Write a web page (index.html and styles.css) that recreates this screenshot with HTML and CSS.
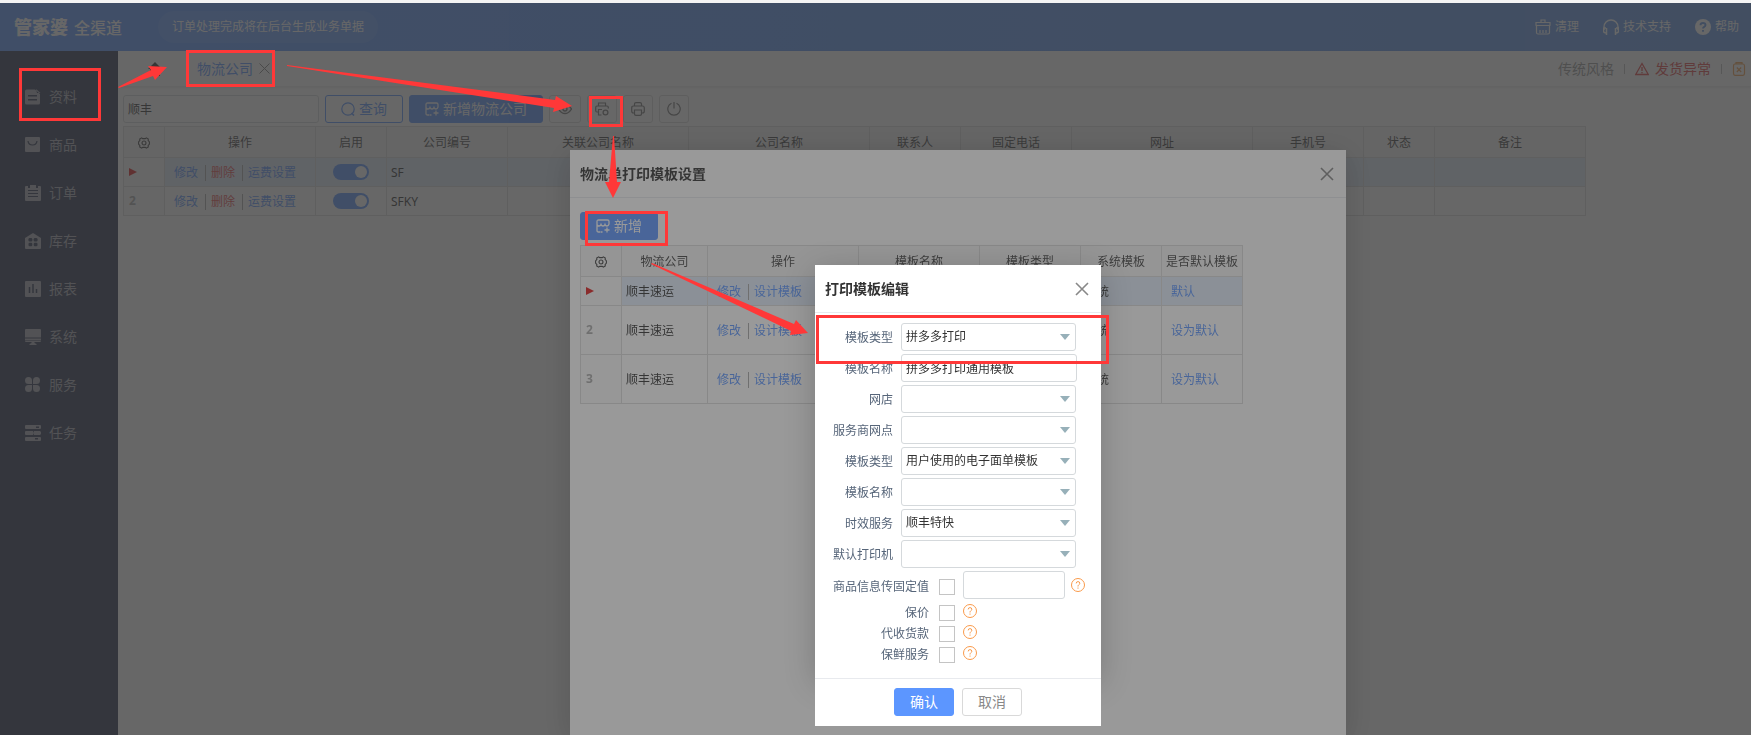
FILE: index.html
```html
<!DOCTYPE html>
<html lang="zh-CN">

<head>
  <meta charset="UTF-8">
  <meta name="viewport" content="width=device-width, initial-scale=1.0">
  <title>管家婆全渠道 - 物流公司</title>
  <link rel="stylesheet" href="styles.css">
</head>

<body>
  <!-- Shared icons -->
  <svg class="symbols" aria-hidden="true">
    <symbol id="icon-gear" viewBox="0 0 14 14">
      <path d="M4.300 1 L5.500 1.900 H8.500 L9.700 1 L12 2.400 L11.800 4 L13.300 5.800 V8.200 L11.800 10 L12 11.600 L9.700 13 L8.500 12.100 H5.500 L4.300 13 L2 11.600 L2.200 10 L.7 8.200 V5.800 L2.200 4 L2 2.400 Z" fill="none" stroke="currentColor" stroke-width="1.300" />
      <circle cx="7" cy="7" r="2.300" fill="none" stroke="currentColor" stroke-width="1.300" />
    </symbol>
    <symbol id="icon-add" viewBox="0 0 14 14">
      <path d="M4.500 13 H2.500 Q1 13 1 11.500 V2.500 Q1 1 2.500 1 H11.500 Q13 1 13 2.500 V5 Q12.500 7 11 7 Q9.500 7 9 5.500 Q8.500 7 7 7 Q5.500 7 5 5.500 Q4.500 7 3 7 Q1.500 7 1 5.500 M5 13 H6.500 M11 8.500 V13.500 M8.500 11 H13.500" fill="none" stroke="currentColor" stroke-width="1.300" />
    </symbol>
    <symbol id="icon-close" viewBox="0 0 14 14">
      <path d="M1 1 L13 13 M13 1 L1 13" fill="none" stroke="currentColor" stroke-width="1.600" />
    </symbol>
    <symbol id="icon-help" viewBox="0 0 14 14">
      <circle cx="7" cy="7" r="6.500" fill="none" stroke="currentColor" />
      <path d="M5.200 5.400 Q5.200 3.600 7 3.600 Q8.800 3.600 8.800 5.300 Q8.800 6.300 7.700 6.900 Q7 7.300 7 8.500 M7 9.500 V10.700" fill="none" stroke="currentColor" />
    </symbol>
  </svg>

  <div class="app">
    <header class="topbar">
      <div class="logo"><b>管家婆</b><span>全渠道</span></div>
      <div class="notice">订单处理完成将在后台生成业务单据</div>
      <nav class="top-links">
        <a href="#">
          <svg class="icon-16" viewBox="0 0 16 16"><path d="M6 3 V1 H10 V3 M1 6 V3.500 H15 V6 M.5 6.500 H15.500 M1.500 6.500 V13.500 Q1.500 15 3 15 H13 Q14.500 15 14.500 13.500 V6.500 M5 14 V11 M8 14 V11 M11 14 V11" fill="none" stroke="currentColor" stroke-width="1.200" /></svg>
          <span>清理</span>
        </a>
        <a href="#">
          <svg class="icon-16" viewBox="0 0 16 16"><path d="M1 11 V8 A7 7 0 0 1 15 8 V11" fill="none" stroke="currentColor" stroke-width="1.400" /><path d="M.5 9 H3 M3.500 9 V16 M12.500 9 V16 M13 9 H15.500 V12 Q15.500 14 13 14 M.5 9 V12 Q.5 14 3 14" fill="none" stroke="currentColor" stroke-width="1.500" /></svg>
          <span>技术支持</span>
        </a>
        <a href="#">
          <svg class="icon-16" viewBox="0 0 16 16"><circle cx="8" cy="8" r="8" fill="currentColor" /><path d="M5.500 6.200 Q5.500 4 8 4 Q10.500 4 10.500 6 Q10.500 7.200 9.200 7.800 Q8 8.400 8 9.600 M8 11 V12.800" fill="none" stroke="#6698e6" stroke-width="1.900" /></svg>
          <span>帮助</span>
        </a>
      </nav>
    </header>

    <div class="body">
      <nav class="sidebar">
        <a href="#"><svg class="icon-16" viewBox="0 0 16 16"><path fill-rule="evenodd" d="M1.500 .5 H10 L15 5 V14 Q15 15.500 13.500 15.500 H1.500 Q0 15.500 0 14 V2 Q0 .5 1.500 .5 Z M3 6 V7.500 H12 V6 Z M3 10 V11.500 H12 V10 Z M11 0 L15.500 4 H12 Z" fill="currentColor" /></svg>资料</a>
        <a href="#"><svg class="icon-16" viewBox="0 0 16 16"><rect width="15" height="15" rx="1" fill="currentColor" /><path d="M3 4 Q3.500 8 7.500 8 Q11.500 8 12 4" fill="none" stroke="#2b3350" stroke-width="1.200" /></svg>商品</a>
        <a href="#"><svg class="icon-16" viewBox="0 0 16 16"><path d="M1 1 H3 V3 H5 V0 H11 V3 H13 V1 H15 Q16 1 16 2 V15 Q16 16 15 16 H1 Q0 16 0 15 V2 Q0 1 1 1 Z" fill="currentColor" /><path d="M3 5.500 H13 M3 8.500 H13 M3 11.500 H13" stroke="#2b3350" /></svg>订单</a>
        <a href="#"><svg class="icon-16" viewBox="0 0 16 16"><path d="M8 0 L16 5 V15 Q16 16 15 16 H1 Q0 16 0 15 V5 Z" fill="currentColor" /><g fill="#2b3350"><rect x="3.500" y="5" width="3.800" height="3.500" rx="1.200" /><rect x="8.700" y="5" width="3.800" height="3.500" rx="1.200" /><rect x="3.500" y="9.800" width="3.800" height="3.500" rx="1.200" /><rect x="8.700" y="9.800" width="3.800" height="3.500" rx="1.200" /></g></svg>库存</a>
        <a href="#"><svg class="icon-16" viewBox="0 0 16 16"><rect width="16" height="16" rx="1" fill="currentColor" /><path d="M4.500 6 V12 M8 3 V12 M11.500 8 V12" stroke="#2b3350" stroke-width="1.500" /></svg>报表</a>
        <a href="#"><svg class="icon-16" viewBox="0 0 16 16"><path d="M1 0 H15 Q16 0 16 1 V8.500 H0 V1 Q0 0 1 0 Z M0 9.500 H16 V11 H0 Z M0 11.500 H16 V12 Q16 13 15 13 H1 Q0 13 0 12 Z M6.500 13 H9.500 V14 L11.500 15 V16 H4.500 V15 L6.500 14 Z" fill="currentColor" /></svg>系统</a>
        <a href="#"><svg class="icon-16" viewBox="0 0 16 16"><path d="M3.500 0 A3.500 3.500 0 0 1 7 3.500 V7 H3.500 A3.500 3.500 0 0 1 3.500 0 Z M11.500 0 A3.500 3.500 0 0 1 11.500 7 H8 V3.500 A3.500 3.500 0 0 1 11.500 0 Z M3.500 8 H7 V11.500 A3.500 3.500 0 1 1 3.500 8 Z M8 8 H11.500 A3.500 3.500 0 1 1 8 11.500 Z" fill="currentColor" /></svg>服务</a>
        <a href="#"><svg class="icon-16" viewBox="0 0 16 16"><path fill-rule="evenodd" d="M1 0 H15 Q16 0 16 1 V3 Q16 4 15 4 H1 Q0 4 0 3 V1 Q0 0 1 0 Z M11 1.500 V3 H14 V1.500 Z M1 6 H8 V10 H1 Q0 10 0 9 V7 Q0 6 1 6 Z M9 6 H15 L16 7 V9 L15 10 H9 L8 8 Z M1 12 H15 Q16 12 16 13 V15 Q16 16 15 16 H1 Q0 16 0 15 V13 Q0 12 1 12 Z M10 13 V14.500 H13 V13 Z" fill="currentColor" /></svg>任务</a>
      </nav>

      <main class="main">
        <div class="tabs">
          <a href="#" class="home" aria-label="首页"><svg class="icon-16" viewBox="0 0 16 16"><path d="M8 1 L15 8 H13 V15 H10 V10 H6 V15 H3 V8 H1 Z" fill="currentColor" /></svg></a>
          <div class="tab">
            <a href="#">物流公司</a>
            <button type="button" class="tab-close" aria-label="关闭标签"><svg class="icon-11" viewBox="0 0 11 11"><path d="M.5 .5 L10.500 10.500 M10.500 .5 L.5 10.500" fill="none" stroke="currentColor" /></svg></button>
          </div>
          <div class="tab-links">
            <a href="#">传统风格</a>
            <i></i>
            <a href="#" class="warn"><svg class="icon-14" viewBox="0 0 14 14"><path d="M7 1.500 L13.300 12.500 H.7 Z M7 5 V9 M7 10 V11.200" fill="none" stroke="currentColor" stroke-width="1.300" /></svg>发货异常</a>
            <i></i>
            <a href="#" class="orange" aria-label="清空"><svg class="icon-14" viewBox="0 0 14 14"><path d="M4 2 V.7 H10 V2 M3 2 H11 Q12.500 2 12.500 4 V11.300 Q12.500 13.300 11 13.300 H3 Q1.500 13.300 1.500 11.300 V4 Q1.500 2 3 2 Z M4.800 5.500 L9.200 10 M9.200 5.500 L4.800 10" fill="none" stroke="currentColor" stroke-width="1.200" /></svg></a>
          </div>
        </div>

        <div class="toolbar">
          <input type="text" class="search" value="顺丰" aria-label="搜索">
          <button type="button" class="btn outline"><svg class="icon-14" viewBox="0 0 14 14"><circle cx="7" cy="7" r="6.200" fill="none" stroke="currentColor" stroke-width="1.200" /><path d="M10.500 11 L13 13.500" stroke="currentColor" stroke-width="1.600" /></svg>查询</button>
          <button type="button" class="btn primary"><svg class="icon-14"><use href="#icon-add" /></svg>新增物流公司</button>
          <button type="button" class="btn tool view" aria-label="查看"><svg class="icon-14" viewBox="0 0 14 14"><path d="M.5 7 Q3.500 2.500 7 2.500 Q10.500 2.500 13.500 7 Q10.500 11.500 7 11.500 Q3.500 11.500 .5 7 Z" fill="none" stroke="currentColor" stroke-width="1.300" /><circle cx="7" cy="7" r="2" fill="none" stroke="currentColor" stroke-width="1.300" /></svg></button>
          <button type="button" class="btn tool" aria-label="打印设置"><svg class="icon-14" viewBox="0 0 14 14"><path d="M3.500 4 V1 H10.500 V4 M3.500 10 H2 Q.7 10 .7 8.500 V5.500 Q.7 4 2 4 H12 Q13.300 4 13.300 5.500 V6.500 M7 7.500 H3.500 V13 H6.500" fill="none" stroke="currentColor" stroke-width="1.200" /><circle cx="10.500" cy="10.500" r="2.400" fill="none" stroke="currentColor" stroke-width="1.300" /></svg></button>
          <button type="button" class="btn tool" aria-label="打印"><svg class="icon-14" viewBox="0 0 14 14"><path d="M3.500 4 V2 Q3.500 .7 5 .7 H9 Q10.500 .7 10.500 2 V4 M3.500 11 H2.500 Q.7 11 .7 9 V6 Q.7 4 2.500 4 H11.500 Q13.300 4 13.300 6 V9 Q13.300 11 11.500 11 H10.500 M3.500 8 H10.500 V12 Q10.500 13.300 9 13.300 H5 Q3.500 13.300 3.500 12 Z" fill="none" stroke="currentColor" stroke-width="1.200" /></svg></button>
          <button type="button" class="btn tool" aria-label="停用"><svg class="icon-14" viewBox="0 0 14 14"><path d="M4.500 1.300 A6.200 6.200 0 1 0 9.500 1.300 M7 0 V6.500" fill="none" stroke="currentColor" stroke-width="1.200" /></svg></button>
        </div>

        <table class="grid companies">
          <colgroup>
            <col class="c-no"><col class="c-ops"><col class="c-on"><col class="c-code"><col class="c-wide"><col class="c-wide">
            <col class="c-contact"><col class="c-tel"><col class="c-wide"><col class="c-tel"><col class="c-on"><col class="c-ops">
          </colgroup>
          <thead>
            <tr>
              <th aria-label="列设置"><svg class="icon-12"><use href="#icon-gear" /></svg></th>
              <th>操作</th><th>启用</th><th>公司编号</th><th>关联公司名称</th><th>公司名称</th>
              <th>联系人</th><th>固定电话</th><th>网址</th><th>手机号</th><th>状态</th><th>备注</th>
            </tr>
          </thead>
          <tbody>
            <tr class="selected">
              <td class="no"><span class="marker"></span></td>
              <td><div class="ops"><a href="#">修改</a><a href="#" class="del">删除</a><a href="#">运费设置</a></div></td>
              <td class="center"><input type="checkbox" class="switch" aria-label="启用 SF" checked></td>
              <td>SF</td><td></td><td></td><td></td><td></td><td></td><td></td><td></td><td></td>
            </tr>
            <tr>
              <td class="no">2</td>
              <td><div class="ops"><a href="#">修改</a><a href="#" class="del">删除</a><a href="#">运费设置</a></div></td>
              <td class="center"><input type="checkbox" class="switch" aria-label="启用 SFKY" checked></td>
              <td>SFKY</td><td></td><td></td><td></td><td></td><td></td><td></td><td></td><td></td>
            </tr>
          </tbody>
        </table>
      </main>
    </div>
  </div>

  <!-- Template list window -->
  <div class="mask mask-list">
    <section class="dialog list-dialog" role="dialog" aria-labelledby="list-title">
      <div class="dialog-main">
        <div class="dialog-head">
          <h2 id="list-title">物流单打印模板设置</h2>
          <button type="button" class="close" aria-label="关闭"><svg class="icon-14"><use href="#icon-close" /></svg></button>
        </div>
        <div class="list-body">
          <button type="button" class="btn primary"><svg class="icon-14"><use href="#icon-add" /></svg>新增</button>
          <table class="grid templates">
            <colgroup>
              <col class="c-no"><col class="c-company"><col class="c-ops"><col class="c-code"><col class="c-type"><col class="c-flag"><col class="c-flag">
            </colgroup>
            <thead>
              <tr>
                <th aria-label="列设置"><svg class="icon-12"><use href="#icon-gear" /></svg></th>
                <th>物流公司</th><th>操作</th><th>模板名称</th><th>模板类型</th><th>系统模板</th><th>是否默认模板</th>
              </tr>
            </thead>
            <tbody>
              <tr class="selected">
                <td class="no"><span class="marker"></span></td>
                <td>顺丰速运</td>
                <td><div class="ops"><a href="#">修改</a><a href="#">设计模板</a></div></td>
                <td></td><td></td><td>系统</td>
                <td><div class="ops"><a href="#">默认</a></div></td>
              </tr>
              <tr class="tall">
                <td class="no">2</td>
                <td>顺丰速运</td>
                <td><div class="ops"><a href="#">修改</a><a href="#">设计模板</a></div></td>
                <td></td><td></td><td>系统</td>
                <td><div class="ops"><a href="#">设为默认</a></div></td>
              </tr>
              <tr class="tall">
                <td class="no">3</td>
                <td>顺丰速运</td>
                <td><div class="ops"><a href="#">修改</a><a href="#">设计模板</a></div></td>
                <td></td><td></td><td>系统</td>
                <td><div class="ops"><a href="#">设为默认</a></div></td>
              </tr>
            </tbody>
          </table>
        </div>
      </div>
    </section>
  </div>

  <!-- Template edit window -->
  <div class="mask mask-edit">
    <form class="dialog edit-dialog" role="dialog" aria-labelledby="edit-title">
      <div class="dialog-main">
        <div class="dialog-head">
          <h2 id="edit-title">打印模板编辑</h2>
          <button type="button" class="close" aria-label="关闭"><svg class="icon-14"><use href="#icon-close" /></svg></button>
        </div>
        <div class="fields">
          <div class="field"><label for="kind">模板类型</label><div class="select"><select id="kind"><option>拼多多打印</option></select></div></div>
          <div class="field"><label for="name">模板名称</label><input type="text" id="name" value="拼多多打印通用模板"></div>
          <div class="field"><label for="shop">网店</label><div class="select"><select id="shop"><option></option></select></div></div>
          <div class="field"><label for="branch">服务商网点</label><div class="select"><select id="branch"><option></option></select></div></div>
          <div class="field"><label for="sheet">模板类型</label><div class="select"><select id="sheet"><option>用户使用的电子面单模板</option></select></div></div>
          <div class="field"><label for="sheet-name">模板名称</label><div class="select"><select id="sheet-name"><option></option></select></div></div>
          <div class="field"><label for="speed">时效服务</label><div class="select"><select id="speed"><option>顺丰特快</option></select></div></div>
          <div class="field"><label for="printer">默认打印机</label><div class="select"><select id="printer"><option></option></select></div></div>
          <div class="check fixed-value"><label for="fixed">商品信息传固定值</label><input type="checkbox" id="fixed"><input type="text" aria-label="固定值"><svg class="icon-14 help"><use href="#icon-help" /></svg></div>
          <div class="check"><label for="insured">保价</label><input type="checkbox" id="insured"><svg class="icon-14 help"><use href="#icon-help" /></svg></div>
          <div class="check"><label for="cod">代收货款</label><input type="checkbox" id="cod"><svg class="icon-14 help"><use href="#icon-help" /></svg></div>
          <div class="check"><label for="fresh">保鲜服务</label><input type="checkbox" id="fresh"><svg class="icon-14 help"><use href="#icon-help" /></svg></div>
        </div>
      </div>
      <div class="dialog-foot">
        <button type="button" class="btn primary">确认</button>
        <button type="button" class="btn plain">取消</button>
      </div>
    </form>
  </div>

  <!-- Step markers -->
  <svg class="marks" aria-hidden="true">
    <g fill="none" stroke="#ff3838" stroke-width="3">
      <rect x="20.500" y="69.500" width="79" height="50" />
      <rect x="187.500" y="51.500" width="86" height="34" />
      <rect x="590.500" y="97.500" width="31" height="28" />
      <rect x="586.500" y="212.500" width="80" height="32" />
      <rect x="817.500" y="316.500" width="290" height="46" />
    </g>
    <g fill="#ff3838">
      <path d="M118 87 L151 70 L148 66 L167 67 L155 80 L153 76 L119 88 Z" />
      <path d="M287 65 L555 100 L556 96 L572 106 L553 112 L554 108 L287 66 Z" />
      <path d="M613 136 H614 L617 182 H621 L613 198 L605 182 H609 Z" />
      <path d="M652 263 L794 324 L796 320 L808 333 L790 335 L791 331 L651 264 Z" />
    </g>
  </svg>
</body>

</html>
```
FILE: styles.css
```css
* {
  box-sizing: border-box;
}

body {
  margin: 0;
  height: 100vh;
  overflow: hidden;
  font-family: "Noto Sans", "Noto Sans CJK SC", sans-serif;
  font-size: 12px;
  line-height: 18px;
  color: #333;
  background: #fff;
}

a {
  color: #5c96ff;
  text-decoration: none;
}

button,
input,
select {
  font: inherit;
  color: inherit;
  margin: 0;
}

svg {
  flex: none;
}

.symbols {
  display: none;
}

.icon-11 {
  width: 11px;
  height: 11px;
}

.icon-12 {
  width: 12px;
  height: 12px;
}

.icon-14 {
  width: 14px;
  height: 14px;
}

.icon-16 {
  width: 16px;
  height: 16px;
}

.app {
  display: flex;
  flex-direction: column;
  height: 100vh;
  border-top: 3px solid #f4f4f4;
}

/* top bar */
.topbar {
  display: flex;
  align-items: center;
  height: 48px;
  padding: 0 12px 0 14px;
  color: #fff;
  background: linear-gradient(90deg, #5c96ff, #6698e6);
}

.logo {
  display: flex;
  align-items: center;
  gap: 6px;
  width: 144px;
  font-size: 16px;
  line-height: 24px;
}

.logo b {
  font-size: 18px;
  font-weight: 900;
}

.logo span {
  padding-top: 2px;
  font-weight: 500;
}

.notice {
  padding: 7px 14px;
  border-radius: 16px;
  background: rgba(255, 255, 255, .08);
}

.top-links {
  display: flex;
  gap: 24px;
  margin-left: auto;
}

.top-links a {
  display: flex;
  align-items: center;
  gap: 4px;
  color: #fff;
}

.body {
  display: flex;
  flex: 1;
}

/* sidebar */
.sidebar {
  display: flex;
  flex-direction: column;
  width: 118px;
  padding-top: 22px;
  background: #2b3350;
}

.sidebar a {
  display: flex;
  align-items: center;
  gap: 8px;
  height: 48px;
  padding-left: 25px;
  font-size: 14px;
  color: #a6a9b3;
}

.main {
  flex: 1;
  min-width: 0;
}

.tabs {
  display: flex;
  align-items: center;
  height: 36px;
  padding: 0 5px 0 29px;
  font-size: 14px;
  border-bottom: 1px solid #eee;
  box-shadow: 0 1px 2px rgba(0, 0, 0, .08);
}

.home {
  display: flex;
  color: #333;
}

.tab {
  display: flex;
  align-items: center;
  gap: 6px;
  margin-left: 34px;
}

.tab-close,
.close {
  display: flex;
  padding: 0;
  border: 0;
  background: none;
  color: #888;
  cursor: pointer;
}

.tab-links {
  display: flex;
  align-items: center;
  gap: 10px;
  margin-left: auto;
}

.tab-links a {
  display: flex;
  align-items: center;
  gap: 6px;
  color: #999;
}

.tab-links .warn {
  color: #e04848;
}

.tab-links .orange {
  color: #f0a050;
}

.tab-links i {
  width: 1px;
  height: 10px;
  background: #bbb;
}

/* toolbar and buttons */
.toolbar {
  display: flex;
  gap: 6px;
  padding: 8px 5px 3px;
}

input[type="text"],
select {
  height: 28px;
  padding: 0 4px;
  border: 1px solid #d5d9dc;
  border-radius: 3px;
  background: #fff;
}

.search {
  width: 196px;
}

.btn {
  display: flex;
  align-items: center;
  justify-content: center;
  gap: 4px;
  height: 28px;
  padding: 0 15px;
  border: 1px solid #d9d9d9;
  border-radius: 3px;
  font-size: 14px;
  background: #fff;
  cursor: pointer;
}

.btn.outline {
  color: #5c96ff;
  border-color: #5c96ff;
}

.btn.primary {
  color: #fff;
  border-color: #5c96ff;
  background: #5c96ff;
}

.btn.tool {
  width: 30px;
  padding: 0;
  color: #777;
}

.btn.view {
  width: 32px;
}

.btn.plain {
  color: #888;
}

/* grids */
.grid {
  table-layout: fixed;
  border-collapse: collapse;
}

.companies {
  width: 1463px;
  margin-left: 5px;
}

.templates {
  width: 663px;
  margin-top: 5px;
}

.c-no {
  width: 41px;
}

.c-ops {
  width: 151px;
}

.c-on {
  width: 71px;
}

.c-code {
  width: 121px;
}

.c-wide {
  width: 181px;
}

.c-contact {
  width: 91px;
}

.c-tel {
  width: 111px;
}

.c-company {
  width: 86px;
}

.c-type {
  width: 101px;
}

.c-flag {
  width: 81px;
}

.grid th,
.grid td {
  height: 29px;
  padding: 2px 4px 0;
  border: 1px solid #dcdcdc;
  text-align: left;
}

.grid th {
  height: 31px;
  font-weight: 400;
  text-align: center;
  white-space: nowrap;
  background: #f7f7f7;
  color: #444;
}

.grid th svg {
  display: block;
  margin: 0 auto;
}

.grid .tall td {
  height: 49px;
}

.grid .selected td {
  background: #e2edfa;
}

.grid .no,
.grid .selected .no {
  padding: 0 5px;
  font-weight: 700;
  color: #aaa;
  background: #fafafa;
}

.grid .center {
  padding-top: 0;
  text-align: center;
}

.marker {
  display: block;
  width: 0;
  border: 4px solid transparent;
  border-left: 8px solid #e02020;
  border-right: 0;
}

.ops {
  display: flex;
  padding-left: 5px;
}

.ops a {
  line-height: 16px;
}

.ops a + a {
  margin-left: 7px;
  padding-left: 5px;
  border-left: 1px solid #aaa;
}

.ops .del {
  color: #e85050;
}

.switch {
  display: block;
  appearance: none;
  width: 36px;
  height: 16px;
  margin: 0 auto;
  padding: 2px;
  border-radius: 8px;
  background: #5c96ff;
}

.switch::before {
  content: "";
  display: block;
  width: 12px;
  height: 12px;
  margin-left: auto;
  border-radius: 50%;
  background: #fff;
}

/* dialogs */
.mask {
  position: fixed;
  top: 3px;
  right: 0;
  bottom: 0;
  left: 0;
  display: flex;
  justify-content: center;
  align-items: flex-start;
  padding-left: 165px;
  overflow: hidden;
  background: rgba(55, 55, 55, .51);
}

.mask-list {
  padding-top: 147px;
}

.mask-edit {
  padding-top: 262px;
}

.dialog {
  display: flex;
  flex-direction: column;
}

.dialog-main {
  flex: 1;
  background: #fff;
  box-shadow: 0 6px 30px rgba(0, 0, 0, .2);
}

.list-dialog {
  width: 776px;
  min-height: 100%;
}

.edit-dialog {
  width: 286px;
}

.dialog-head {
  display: flex;
  align-items: center;
  justify-content: space-between;
  height: 48px;
  padding: 0 12px 0 10px;
  border-bottom: 1px solid #e8eaee;
}

.dialog-head h2 {
  margin: 0;
  font-size: 14px;
  font-weight: 700;
}

.list-body {
  padding: 14px 10px;
}

.fields {
  display: flex;
  flex-direction: column;
  gap: 3px;
  padding: 10px 14px 14px 10px;
}

.field {
  display: flex;
  align-items: center;
  gap: 8px;
}

.field label {
  width: 68px;
  padding-top: 2px;
  text-align: right;
  color: #566579;
}

.field > input {
  width: 176px;
}

.select {
  position: relative;
  width: 175px;
}

.select select {
  display: block;
  width: 100%;
  appearance: none;
}

.select::after {
  content: "";
  position: absolute;
  top: 11px;
  right: 6px;
  border: 5px solid transparent;
  border-top: 6px solid #97b0b9;
  border-bottom: 0;
  pointer-events: none;
}

.check {
  display: flex;
  align-items: center;
  height: 18px;
}

.check label {
  width: 104px;
  margin-right: 10px;
  text-align: right;
  color: #566579;
}

.check input[type="checkbox"] {
  appearance: none;
  width: 16px;
  height: 16px;
  margin-right: 8px;
  border: 1px solid #c4c4c4;
  background: #fff;
}

.check input[type="text"] {
  width: 102px;
  margin-right: 6px;
}

.help {
  margin-bottom: 4px;
  color: #f99a4b;
}

.check.fixed-value {
  height: 28px;
  margin-bottom: 2px;
}

.fixed-value label,
.check.fixed-value input[type="checkbox"] {
  margin-top: 4px;
}

.fixed-value .help {
  margin-bottom: 0;
}

.dialog-foot {
  position: relative;
  display: flex;
  justify-content: center;
  gap: 8px;
  padding: 9px 0 10px;
  border-top: 1px solid #e8eaee;
  background: #fff;
}

.dialog-foot .btn {
  width: 60px;
}

/* step markers drawn over everything */
.marks {
  position: fixed;
  top: 0;
  left: 0;
  width: 100%;
  height: 100%;
  pointer-events: none;
}
```
